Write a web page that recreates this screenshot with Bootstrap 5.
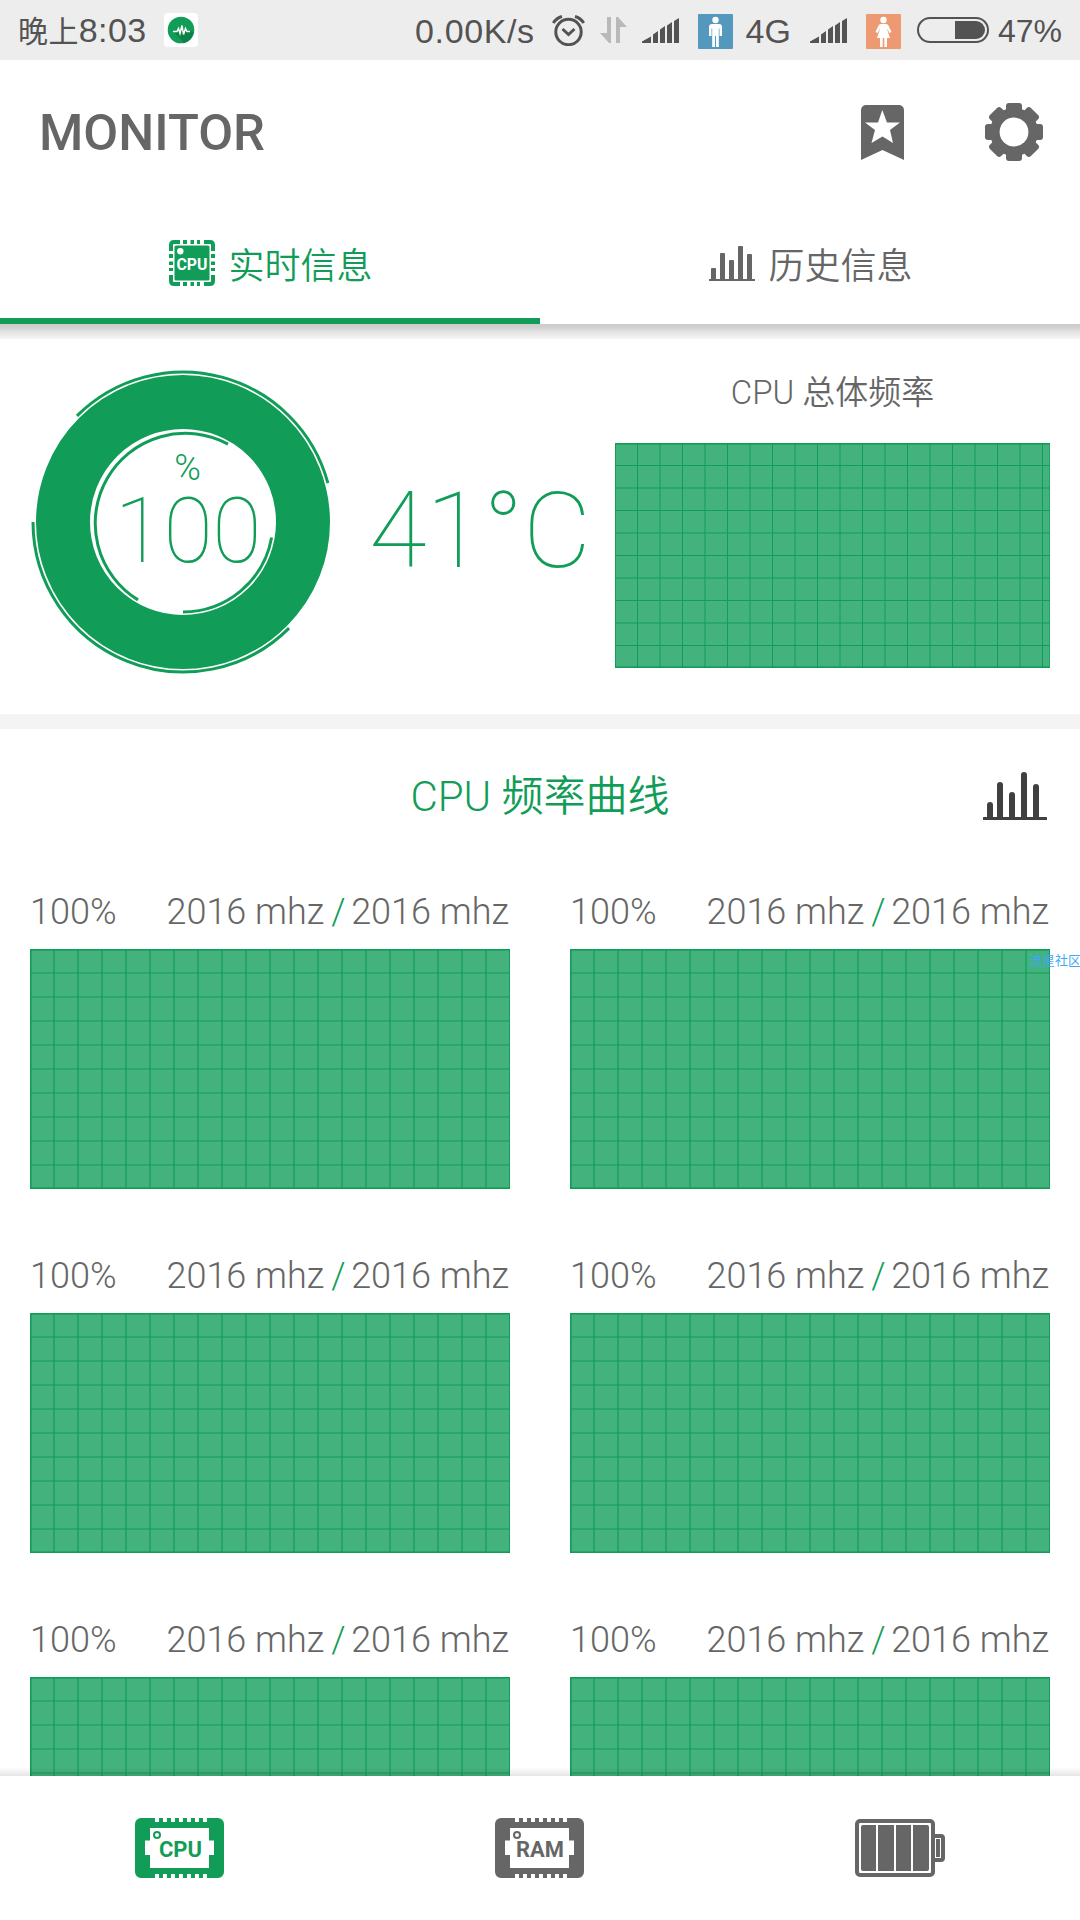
<!DOCTYPE html>
<html lang="zh-CN">
<head>
<meta charset="utf-8">
<title>CPU Monitor</title>
<meta name="viewport" content="width=device-width, initial-scale=1">
<link href="https://cdn.jsdelivr.net/npm/bootstrap@5.3.0/dist/css/bootstrap.min.css" rel="stylesheet">
<style>
:root{--green:#119d58;--ink:#666;--status:#535353}
body{width:1080px;height:1920px;overflow:hidden;background:#fff;color:var(--ink);font-family:Roboto,"Noto Sans CJK SC",sans-serif;font-weight:300}
svg{display:block;flex:none}
.statusbar{height:60px;background:#ededed;color:var(--status);padding:0 18px 0 18px;font:400 34px/60px "Liberation Sans","Noto Sans CJK SC",sans-serif}
.han{font-weight:350}
.statusbar .han{font-size:30px;font-weight:400}
.clock{letter-spacing:.4px;padding-top:2px}
.speed{letter-spacing:.6px;padding-top:1px}
.topbar{height:144px;padding:0 37px 0 36px}
.tabs{height:120px}
.tabs .nav-link{height:120px;padding:4px 0 0 2px;border-radius:0;color:var(--ink);font-size:36px;line-height:54px;border-bottom:6px solid transparent}
.tabs .nav-link.active{color:var(--green);background:none;border-bottom-color:var(--green)}
.tabs .han{padding-top:7px}
.tabshade{height:15px;background:linear-gradient(#cbcbcb,#d0d0d0 20%,#e2e2e2 52%,#f1f1f1 85%,#f4f4f4)}
.overview{height:375px;padding:0 30px}
.temp{font-size:105px;font-weight:100;line-height:120px;letter-spacing:-.4px;color:var(--green);white-space:nowrap}
.totaltitle{font-size:33px;line-height:50px}
.divider{height:15px;background:#f4f4f4}
.curvehead{height:135px;padding:0 30px;color:var(--green);font-size:42px;line-height:60px}
.cores{padding:0 30px;column-gap:60px;display:grid;grid-template-columns:480px 480px}
.core{height:364px}
.corelabel{height:85px;font-size:36px;line-height:42px;padding:27px 1px 0 0;white-space:nowrap}
.corelabel i{font-style:normal;color:var(--green);margin:0 5.5px 0 7px}
.bottomnav{height:144px;background:#fff}
.bottomnav::before{content:"";position:absolute;left:0;right:0;top:-8px;height:8px;background:linear-gradient(rgba(0,0,0,.01),rgba(0,0,0,.1))}
.stamp{position:absolute;left:1029px;top:950px;font:400 13px/19px "Noto Sans CJK SC",sans-serif;color:#3fa9f5;white-space:nowrap}
</style>
<script src="https://cdn.jsdelivr.net/npm/bootstrap@5.3.0/dist/js/bootstrap.bundle.min.js"></script>
</head>
<body class="d-flex flex-column position-relative">

<svg width="0" height="0" class="position-absolute" aria-hidden="true">
  <defs>
    <symbol id="graph" viewBox="0 0 480 240">
      <rect width="480" height="240" fill="#44b27c"/>
      <path stroke="#119d58" stroke-width="1.200" fill="none" d="M24 0v240M48 0v240M72 0v240M96 0v240M120 0v240M144 0v240M168 0v240M192 0v240M216 0v240M240 0v240M264 0v240M288 0v240M312 0v240M336 0v240M360 0v240M384 0v240M408 0v240M432 0v240M456 0v240M0 24h480M0 48h480M0 72h480M0 96h480M0 120h480M0 144h480M0 168h480M0 192h480M0 216h480"/>
      <path stroke="#119d58" fill="none" d="M.5 0v240M479.5 0v240M0 .5h480M0 239.5h480"/>
      <path stroke="#119d58" stroke-opacity=".6" fill="none" d="M0 1.5h480M1.5 0v240M0 238.5h480"/>
    </symbol>
    <symbol id="signal" viewBox="0 0 37 25">
      <path fill="#535353" d="M0 25v-1.500l9-5V25zM11 25v-8.500l5-3.500V25zM18 25V11.500l5-3.500V25zM25 25V7.500l5-3.500V25zM32 25V3l5-3v25z"/>
    </symbol>
    <symbol id="chip" viewBox="0 0 89 60">
      <path fill="currentColor" fill-rule="evenodd" d="M6 0h14v4h4V0h4v4h4V0h4v4h4V0h4v4h4V0h4v4h4V0h4v4h4V0h4v4h4V0h11a6 6 0 0 1 6 6v48a6 6 0 0 1-6 6H72v-4h-4v4h-4v-4h-4v4h-4v-4h-4v4h-4v-4h-4v4h-4v-4h-4v4h-4v-4h-4v4h-4v-4h-4v4H6a6 6 0 0 1-6-6V6a6 6 0 0 1 6-6zM15 10v12.500h-5V37h5v13h59V37h5V22.500h-5V10z"/>
      <circle cx="22" cy="17" r="3" fill="none" stroke="currentColor" stroke-width="2"/>
    </symbol>
  </defs>
</svg>

<header>
  <div class="statusbar d-flex align-items-center">
    <span class="clock"><span class="han">晚上</span>8:03</span>
    <svg style="margin-left:17px" width="34" height="34" viewBox="0 0 34 34"><rect width="34" height="34" rx="4" fill="#fff"/><circle cx="17" cy="17" r="13.300" fill="#119d58"/><path fill="#0d8247" d="M10 19l11-3 8.600 3A13.300 13.300 0 0 1 20 30z"/><path fill="none" stroke="#fff" stroke-width="1.500" d="M9 18.500h4l1.500-3 1.500 5 2-8 1.500 9 2-6 1.500 3h3"/></svg>
    <span class="speed ms-auto">0.00K/s</span>
    <svg style="margin-left:17px" width="33" height="32" viewBox="0 0 33 32"><g fill="none" stroke="#535353" stroke-width="3"><circle cx="16.500" cy="18" r="12.700"/><path d="M10.500 15l6 5.500 6-5.500"/><path d="M1.300 9Q4.500 4 10 2.500M31.700 9Q28.500 4 23 2.500"/></g></svg>
    <svg style="margin-left:15px" width="27" height="26" viewBox="0 0 27 26"><path fill="#b9b9b9" d="M7 0h4v26H9l-9-10h7zM16 26V0h2l9 10h-7v16z"/></svg>
    <svg style="margin-left:15px" width="37" height="25"><use href="#signal"/></svg>
    <svg style="margin:3px 0 0 19px" width="35" height="35" viewBox="0 0 35 35"><rect width="35" height="35" rx="1" fill="#5499bd"/><g fill="#fff"><circle cx="17.500" cy="6" r="3.200"/><path d="M14 10h7q3 0 3 3v9h-2.500v-7.500h-.700V33h-2.800V22h-1v11h-2.800V14.500h-.700V22H11v-9q0-3 3-3z"/></g></svg>
    <span style="margin:1px 0 0 13px">4G</span>
    <svg style="margin-left:19px" width="37" height="25"><use href="#signal"/></svg>
    <svg style="margin:3px 0 0 19px" width="35" height="35" viewBox="0 0 35 35"><rect width="35" height="35" rx="1" fill="#ed9a72"/><g fill="#fff"><circle cx="17.500" cy="6" r="3.200"/><path d="M15 10h5q2 0 2.700 2l2.800 6-2 1-2.800-5 3.300 10H21v9h-2.700v-9h-1.600v9H14v-9h-3l3.300-10-2.800 5-2-1 2.800-6q.700-2 2.700-2z"/></g></svg>
    <svg style="margin-left:16px" width="72" height="26" viewBox="0 0 72 26"><rect x="1" y="1" width="70" height="24" rx="12" fill="none" stroke="#535353" stroke-width="2"/><path fill="#535353" d="M38 4h21a9 9 0 0 1 0 18H38z"/></svg>
    <span style="margin:1px 0 0 9px;font-size:32px">47%</span>
  </div>

  <div class="topbar d-flex align-items-center">
    <svg width="240" height="64" viewBox="0 0 240 64"><text x="3" y="50" textLength="226" lengthAdjust="spacingAndGlyphs" font-family="Roboto,sans-serif" font-weight="500" font-size="50.500" fill="#666">MONITOR</text></svg>
    <svg class="ms-auto" width="43" height="55" viewBox="0 0 43 55"><path fill="#666" fill-rule="evenodd" d="M5 0h33a5 5 0 0 1 5 5v50L21.500 45 0 55V5a5 5 0 0 1 5-5zM21.300 5l-4.300 12.500H4l10 7.500-3.500 13 11-6.500L32 38l-3-13 10-7.500H26z"/></svg>
    <svg style="margin-left:81px" width="58" height="58" viewBox="-29 -29 58 58"><g fill="#666"><circle r="24"/><g id="teeth"><rect x="-8" y="-29" width="16" height="58" rx="3"/><rect x="-29" y="-8" width="58" height="16" rx="3"/></g><use href="#teeth" transform="rotate(45)"/></g><circle r="14.400" fill="#fff"/></svg>
  </div>

  <nav class="tabs nav nav-fill">
    <a class="nav-link active w-50 d-flex align-items-center justify-content-center" href="#">
      <svg style="margin-right:13px" width="46" height="46" viewBox="0 0 46 46"><path fill="none" stroke="currentColor" stroke-width="4" d="M2 11V5q0-3 3-3h6M35 2h6q3 0 3 3v6M44 35v6q0 3-3 3h-6M11 44H5q-3 0-3-3v-6M14 2h4M21.500 2h3.500M28 2h3M14 44h4M21.500 44h3.500M28 44h3M2 14v4M2 21.500v3.500M2 28v3M44 14v4M44 21.500v3.500M44 28v3"/><rect x="5.500" y="5.500" width="35" height="35" rx="1.500" fill="currentColor"/><circle cx="11.300" cy="11.200" r="3.200" fill="#fff"/><text x="23" y="29.500" textLength="31" lengthAdjust="spacingAndGlyphs" text-anchor="middle" font-family="Roboto,sans-serif" font-weight="700" font-size="16" fill="#fff">CPU</text></svg>
      <span class="han">实时信息</span>
    </a>
    <a class="nav-link w-50 d-flex align-items-center justify-content-center" href="#">
      <svg style="margin-right:13px" width="46" height="46" viewBox="0 0 46 46"><path fill="currentColor" d="M0 39h46v2H0z"/><g fill="currentColor"><rect x="2" y="28" width="5" height="12" rx="1"/><rect x="11" y="13" width="5" height="27" rx="1"/><rect x="20" y="20" width="5" height="20" rx="1"/><rect x="29" y="6" width="5" height="34" rx="1"/><rect x="38" y="14" width="5" height="26" rx="1"/></g></svg>
      <span class="han">历史信息</span>
    </a>
  </nav>
</header>

<main class="flex-grow-1 overflow-hidden">
  <div class="tabshade"></div>
  <section class="overview d-flex">
    <svg style="margin-top:30px" width="306" height="306" viewBox="-153 -153 306 306">
      <g fill="none" stroke="#119d58">
        <circle r="120" stroke-width="54"/>
        <g stroke-width="3">
          <path d="M-150 0A150 150 0 0 0 106.070 106.070M-106.070-106.070A150 150 0 0 1 144.900-38.800"/>
          <path d="M-45 77.900A90 90 0 0 1 45-77.900M88.600 15.600A90 90 0 0 1 0 90"/>
        </g>
      </g>
      <g fill="#119d58" text-anchor="middle" font-family="Roboto,sans-serif">
        <text x="4.500" y="-42" font-size="36" font-weight="300">%</text>
        <text x="5" y="40" font-size="90" font-weight="100" textLength="147">100</text>
      </g>
    </svg>
    <div class="temp" style="margin:133px auto 0 33px">41°C</div>
    <div class="text-center">
      <div class="totaltitle" style="padding:29px 0 25px">CPU <span class="han">总体频率</span></div>
      <svg width="435" height="225" viewBox="0 0 435 225"><rect width="435" height="225" fill="#44b27c"/><path stroke="#119d58" fill="none" d="M22.500 0v225M45 0v225M67.500 0v225M90 0v225M112.500 0v225M135 0v225M157.500 0v225M180 0v225M202.500 0v225M225 0v225M247.500 0v225M270 0v225M292.500 0v225M315 0v225M337.500 0v225M360 0v225M382.500 0v225M405 0v225M427.500 0v225M0 22.500h435M0 45h435M0 67.500h435M0 90h435M0 112.500h435M0 135h435M0 157.500h435M0 180h435M0 202.500h435"/><path stroke="#119d58" fill="none" d="M.5 0v225M0 .5h435M0 224.500h435"/><path stroke="#119d58" stroke-opacity=".6" fill="none" d="M0 1.500h435M0 223.500h435M434.500 0v225"/></svg>
    </div>
  </section>
  <div class="divider"></div>

  <section class="curvehead position-relative d-flex align-items-center justify-content-center">
    <span>CPU <span class="han">频率曲线</span></span>
    <svg class="position-absolute end-0" style="margin:0 33px 2px 0" width="64" height="48" viewBox="0 0 64 48"><g fill="#404040"><rect y="45" width="64" height="3" rx=".5"/><path d="M4 46V33q0-3 3-3t3 3v13zM14 46V13q0-3 3-3t3 3v33zM26 46V23q0-3 3-3t3 3v23zM38 46V3q0-3 3-3t3 3v43zM50 46V15q0-3 3-3t3 3v31z"/></g></svg>
  </section>

  <section class="cores">
    <div class="core"><div class="corelabel d-flex justify-content-between"><span>100%</span><span>2016 mhz<i>/</i>2016 mhz</span></div><svg width="480" height="240"><use href="#graph"/></svg></div>
    <div class="core"><div class="corelabel d-flex justify-content-between"><span>100%</span><span>2016 mhz<i>/</i>2016 mhz</span></div><svg width="480" height="240"><use href="#graph"/></svg></div>
    <div class="core"><div class="corelabel d-flex justify-content-between"><span>100%</span><span>2016 mhz<i>/</i>2016 mhz</span></div><svg width="480" height="240"><use href="#graph"/></svg></div>
    <div class="core"><div class="corelabel d-flex justify-content-between"><span>100%</span><span>2016 mhz<i>/</i>2016 mhz</span></div><svg width="480" height="240"><use href="#graph"/></svg></div>
    <div class="core"><div class="corelabel d-flex justify-content-between"><span>100%</span><span>2016 mhz<i>/</i>2016 mhz</span></div><svg width="480" height="240"><use href="#graph"/></svg></div>
    <div class="core"><div class="corelabel d-flex justify-content-between"><span>100%</span><span>2016 mhz<i>/</i>2016 mhz</span></div><svg width="480" height="240"><use href="#graph"/></svg></div>
  </section>
</main>

<footer class="bottomnav position-relative row g-0 align-items-center text-center flex-shrink-0">
  <div class="col d-flex justify-content-center" style="color:var(--green)">
    <svg width="90" height="60" viewBox="0 0 90 60"><use href="#chip" width="89" height="60"/><text x="24" y="38.500" textLength="43" lengthAdjust="spacingAndGlyphs" font-family="Roboto,sans-serif" font-weight="700" font-size="22" fill="currentColor">CPU</text></svg>
  </div>
  <div class="col d-flex justify-content-center">
    <svg width="90" height="60" viewBox="0 0 90 60"><use href="#chip" width="89" height="60"/><text x="21" y="38.500" textLength="48" lengthAdjust="spacingAndGlyphs" font-family="Roboto,sans-serif" font-weight="700" font-size="22" fill="currentColor">RAM</text></svg>
  </div>
  <div class="col d-flex justify-content-center">
    <svg width="90" height="58" viewBox="0 0 90 58"><g fill="none" stroke="#666" stroke-width="4"><rect x="2" y="2" width="76" height="54" rx="3"/><path d="M80 17h6q2 0 2 2v20q0 2-2 2h-6"/></g><g fill="#666"><path d="M8 6h13v46H8q-2 0-2-2V8q0-2 2-2zM23 6h16v46H23zM41 6h15v46H41zM58 6h14q2 0 2 2v42q0 2-2 2H58z"/><path d="M81 20h4v18h-4z"/></g></svg>
  </div>
</footer>
<div class="stamp">流星社区</div>
</body>
</html>
